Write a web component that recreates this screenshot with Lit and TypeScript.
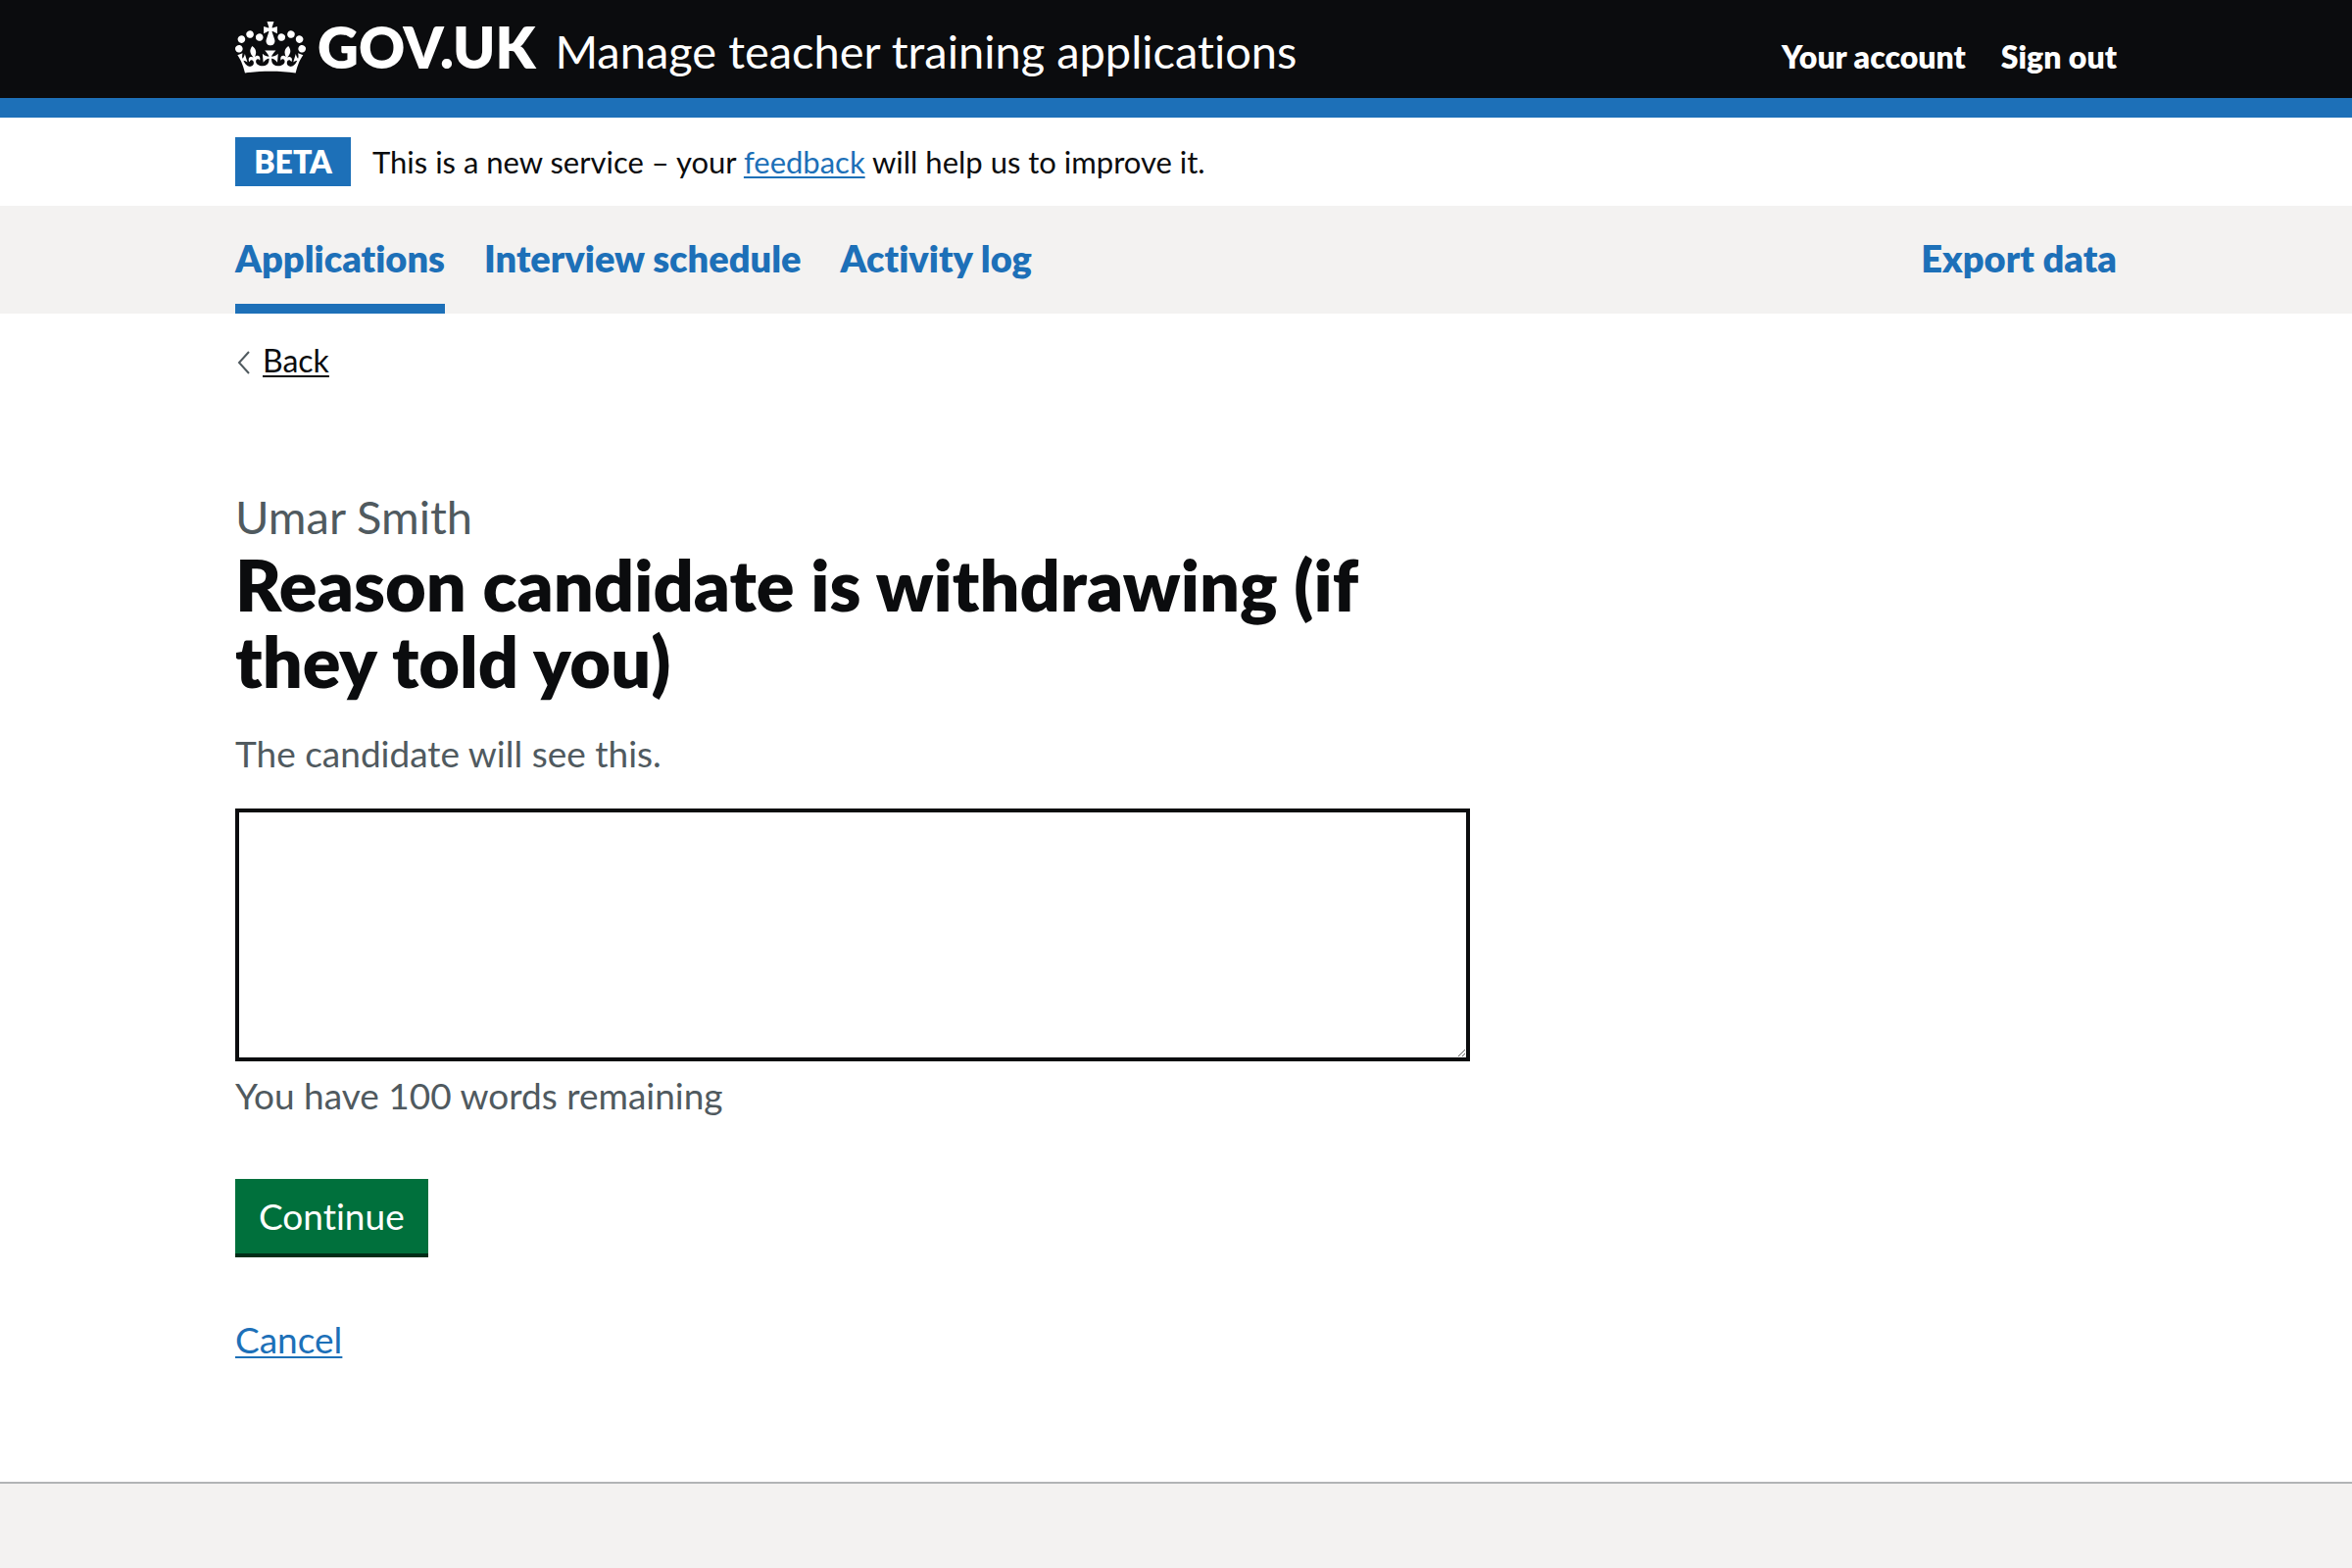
import { LitElement, html, css } from "lit";
import { customElement, state } from "lit/decorators.js";

const WORD_LIMIT = 100;

@customElement("app-root")
export class AppRoot extends LitElement {
  static styles = css`
    :host {
      display: flex;
      flex-direction: column;
      min-height: 100vh;
      background: #fff;
      color: #0b0c0e;
      font-family: Lato, Roboto, sans-serif;
      font-size: 37px;
      line-height: 50px;
      font-variant-ligatures: none;
    }
    *,
    *::before {
      box-sizing: border-box;
    }
    a {
      color: #1d70b8;
      text-decoration-thickness: 2px;
      text-underline-offset: 3px;
    }
    .container {
      width: 100%;
      max-width: 1980px;
      margin: 0 auto;
      padding: 0 30px;
    }

    .header {
      background: #0b0c0e;
      border-bottom: 20px solid #1d70b8;
    }
    .header-bar {
      display: flex;
      align-items: baseline;
      min-height: 100px;
      padding-top: 18px;
    }
    .header a {
      color: #fff;
      text-decoration: none;
    }
    .logo {
      display: flex;
      align-items: center;
      gap: 12px;
      margin-right: 20px;
    }
    .crown {
      width: 72px;
      height: 53px;
      fill: #fff;
    }
    .logo-text {
      align-self: baseline;
      font-size: 58px;
      line-height: 60px;
      font-weight: 800;
    }
    .service {
      font-size: 47px;
      line-height: 60px;
    }
    .account {
      display: flex;
      gap: 36px;
      margin-left: auto;
      font-size: 32px;
      line-height: 40px;
      font-weight: 800;
    }

    .phase {
      display: flex;
      align-items: baseline;
      gap: 22px;
      padding-top: 20px;
      padding-bottom: 20px;
      font-size: 31px;
    }
    .tag {
      min-width: 118px;
      padding: 0 16px;
      background: #1d70b8;
      color: #fff;
      font-size: 32px;
      font-weight: 800;
      text-align: center;
    }

    .nav {
      background: #f3f2f1;
    }
    .nav-list {
      display: flex;
      gap: 40px;
      margin: 0 auto;
      list-style: none;
      font-size: 38px;
      font-weight: 800;
    }
    .nav-list a {
      display: block;
      padding: 28px 0 22px;
      border-bottom: 10px solid transparent;
      text-decoration: none;
    }
    .nav-list a[aria-current] {
      border-color: #1d70b8;
    }
    .nav-end {
      margin-left: auto;
    }

    .back-row {
      display: flex;
      padding-top: 28px;
    }
    .back {
      display: flex;
      align-items: center;
      gap: 12px;
      color: #0b0c0e;
      font-size: 32px;
      line-height: 40px;
      text-decoration: none;
    }
    .back-label {
      text-decoration: underline 2px;
    }
    .chevron {
      width: 16px;
      height: 28px;
      fill: none;
      stroke: #505a5f;
      stroke-width: 2;
    }

    .main {
      display: grid;
      grid-template-columns: repeat(3, 1fr);
      column-gap: 60px;
      padding-top: 109px;
      padding-bottom: 120px;
    }
    .form {
      grid-column: span 2;
      display: flex;
      flex-direction: column;
      align-items: flex-start;
    }
    .title {
      margin: 0;
      font-size: 72px;
      line-height: 78px;
      font-weight: 800;
    }
    .caption {
      display: block;
      color: #505a5f;
      font-size: 47px;
      line-height: 60px;
      font-weight: 400;
    }
    .hint {
      color: #505a5f;
      margin: 31px 0;
    }
    .box {
      display: block;
      width: 100%;
      height: 258px;
      padding: 10px;
      border: 4px solid #0b0c0e;
      border-radius: 0;
      background: #fff;
      color: inherit;
      font: inherit;
      resize: vertical;
    }
    .count {
      color: #505a5f;
      margin: 10px 0 60px;
    }
    .submit {
      margin: 0 0 63px;
      padding: 0 24px;
      border: 0;
      background: #00703c;
      box-shadow: 0 4px 0 #002d18;
      color: #fff;
      font: inherit;
      line-height: 76px;
      cursor: pointer;
    }

    .footer {
      flex: 1;
      min-height: 80px;
      background: #f3f2f1;
      border-top: 2px solid #b1b4b6;
    }
  `;

  @state() private reason = "";

  private get remaining() {
    const words = this.reason.match(/\S+/g);
    return WORD_LIMIT - (words ? words.length : 0);
  }

  private onInput(e: Event) {
    this.reason = (e.target as HTMLTextAreaElement).value;
  }

  render() {
    return html`
      <header class="header">
        <div class="container header-bar">
          <a class="logo" href="#">
            <svg class="crown" viewBox="0 0 132 97" preserveAspectRatio="none" aria-hidden="true">
              <path
                fill-rule="evenodd"
                d="M25 30.2c3.5 1.5 7.7-.2 9.1-3.7 1.5-3.6-.2-7.8-3.9-9.2-3.6-1.4-7.6.3-9.1 3.9-1.4 3.5.3 7.5 3.9 9zM9 39.5c3.6 1.5 7.8-.2 9.2-3.7 1.5-3.6-.2-7.8-3.9-9.1-3.6-1.5-7.6.2-9.1 3.8-1.4 3.5.3 7.5 3.8 9zM4.4 57.2c3.5 1.5 7.7-.2 9.1-3.8 1.5-3.6-.2-7.7-3.9-9.1-3.5-1.5-7.6.3-9.1 3.8-1.4 3.5.3 7.6 3.9 9.1zm38.3-21.4c3.5 1.5 7.7-.2 9.1-3.8 1.5-3.6-.2-7.7-3.9-9.1-3.6-1.5-7.6.3-9.1 3.8-1.3 3.6.4 7.7 3.9 9.1zm64.4-5.6c-3.6 1.5-7.8-.2-9.1-3.7-1.5-3.6.2-7.8 3.8-9.2 3.6-1.4 7.7.3 9.2 3.9 1.3 3.5-.4 7.5-3.9 9zm15.9 9.3c-3.6 1.5-7.7-.2-9.1-3.7-1.5-3.6.2-7.8 3.7-9.1 3.6-1.5 7.7.2 9.2 3.8 1.5 3.5-.3 7.5-3.8 9zm4.7 17.7c-3.6 1.5-7.8-.2-9.2-3.8-1.5-3.6.2-7.7 3.9-9.1 3.6-1.5 7.7.3 9.2 3.8 1.3 3.5-.4 7.6-3.9 9.1zM89.3 35.8c-3.6 1.5-7.8-.2-9.2-3.8-1.4-3.6.2-7.7 3.9-9.1 3.6-1.5 7.7.3 9.2 3.8 1.4 3.6-.3 7.7-3.9 9.1zM69.7 17.7l8.9 4.7V9.3l-8.9 2.8c-.2-.3-.5-.6-.9-.9L72.4 0H59.6l3.5 11.2c-.3.3-.6.5-.9.9l-8.8-2.8v13.1l8.8-4.7c.3.3.6.7.9.9l-5 15.4v.1c-.2.8-.4 1.6-.4 2.4 0 4.1 3.1 7.5 7 8.1h.2c.3 0 .7.1 1 .1.4 0 .7 0 1-.1h.2c4-.6 7.1-4.1 7.1-8.1 0-.8-.1-1.7-.4-2.4V34l-5.1-15.4c.4-.2.7-.6 1-.9zM66 92.8c16.9 0 32.8 1.1 47.1 3.2 4-16.9 8.9-26.7 14-33.5l-9.6-3.4c1 4.9 1.1 7.2 0 10.2-1.5-1.4-3-4.3-4.2-8.7L108.6 76c2.8-2 5-3.2 7.5-3.3-4.4 9.4-10 11.9-13.6 11.2-4.3-.8-6.3-4.6-5.6-7.9 1-4.7 5.7-5.9 8-.5 4.3-8.7-3-11.4-7.6-8.8 7.1-7.2 7.9-13.5 2.1-21.1-8 6.1-8.1 12.3-4.5 20.8-4.7-5.4-12.1-2.5-9.5 6.2 3.4-5.2 7.9-2 7.2 3.1-.6 4.3-6.4 7.8-13.5 7.2-10.3-.9-10.9-8-11.2-13.8 2.5-.5 7.1 1.8 11 7.3L80.2 60c-4.1 4.4-8 5.3-12.3 5.4 1.4-4.4 8-11.6 8-11.6H55.5s6.4 7.2 7.9 11.6c-4.2-.1-8-1-12.3-5.4l1.4 16.4c3.9-5.5 8.5-7.7 10.9-7.3-.3 5.8-.9 12.8-11.1 13.8-7.2.6-12.9-2.9-13.5-7.2-.7-5 3.8-8.3 7.1-3.1 2.7-8.7-4.6-11.6-9.4-6.2 3.7-8.5 3.6-14.7-4.6-20.8-5.8 7.6-5 13.9 2.2 21.1-4.7-2.6-11.9.1-7.7 8.8 2.3-5.5 7.1-4.2 8.1.5.7 3.3-1.3 7.1-5.7 7.9-3.5.7-9-1.8-13.5-11.2 2.5.1 4.7 1.3 7.5 3.3l-4.7-15.4c-1.2 4.4-2.7 7.2-4.3 8.7-1.1-3-.9-5.3 0-10.2l-9.5 3.4c5 6.9 9.9 16.7 14 33.5 14.8-2.1 30.8-3.2 47.7-3.2z"
              ></path>
            </svg>
            <span class="logo-text">GOV.UK</span>
          </a>
          <a class="service" href="#">Manage teacher training applications</a>
          <nav class="account">
            <a href="#">Your account</a>
            <a href="#">Sign out</a>
          </nav>
        </div>
      </header>

      <div class="container phase">
        <strong class="tag">BETA</strong>
        <span>This is a new service – your <a href="#">feedback</a> will help us to improve it.</span>
      </div>

      <nav class="nav">
        <ul class="container nav-list">
          <li><a href="#" aria-current="page">Applications</a></li>
          <li><a href="#">Interview schedule</a></li>
          <li><a href="#">Activity log</a></li>
          <li class="nav-end"><a href="#">Export data</a></li>
        </ul>
      </nav>

      <div class="container back-row">
        <a class="back" href="#">
          <svg class="chevron" viewBox="0 0 16 28" aria-hidden="true">
            <path d="M14 5 4 16 14 27"></path>
          </svg>
          <span class="back-label">Back</span>
        </a>
      </div>

      <main class="container main">
        <form class="form" @submit=${(e: Event) => e.preventDefault()}>
          <h1 class="title">
            <label for="reason">
              <span class="caption">Umar Smith</span>
              Reason candidate is withdrawing (if they told you)
            </label>
          </h1>
          <div class="hint" id="reason-hint">The candidate will see this.</div>
          <textarea
            class="box"
            id="reason"
            name="reason"
            aria-describedby="reason-hint reason-count"
            .value=${this.reason}
            @input=${this.onInput}
          ></textarea>
          <div class="count" id="reason-count">You have ${this.remaining} words remaining</div>
          <button class="submit" type="submit">Continue</button>
          <a href="#">Cancel</a>
        </form>
      </main>

      <footer class="footer"></footer>
    `;
  }
}
